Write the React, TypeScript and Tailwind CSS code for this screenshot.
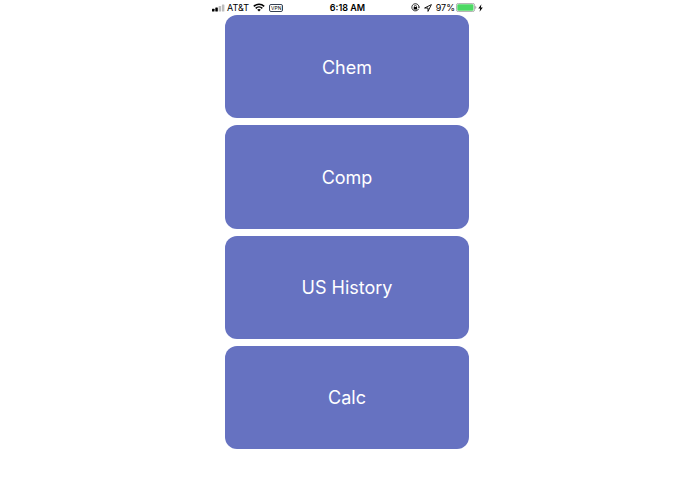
const classes = ['Chem', 'Comp', 'US History', 'Calc'];

function SignalIcon() {
  return (
    <svg width="13" height="8" viewBox="0 0 13 8" aria-hidden="true">
      <rect x="0" y="4.7" width="2.5" height="2.8" rx="0.5" fill="#000" />
      <rect x="3.3" y="3.5" width="2.5" height="4" rx="0.5" fill="#000" />
      <rect x="6.6" y="2" width="2.5" height="5.5" rx="0.5" fill="#bdbdbd" />
      <rect x="9.9" y="0.5" width="2.5" height="7" rx="0.5" fill="#bdbdbd" />
    </svg>
  );
}

function WifiIcon() {
  return (
    <svg width="12" height="9" viewBox="0 0 12 9" fill="none" stroke="#000" strokeWidth="1.5" aria-hidden="true">
      <path d="M0.8 3.4a7.4 7.4 0 0 1 10.4 0" />
      <path d="M2.7 5.4a4.7 4.7 0 0 1 6.6 0" />
      <path d="M6 8.5 4.2 6.8a2.6 2.6 0 0 1 3.6 0Z" fill="#000" stroke="none" />
    </svg>
  );
}

function RotationLockIcon() {
  return (
    <svg width="9" height="9" viewBox="0 0 9 9" fill="none" stroke="#000" aria-hidden="true">
      <path d="M7.7 5.8A3.6 3.6 0 1 1 8 3.8" strokeWidth="0.8" />
      <path d="M6.8 3.7h2.2L8 5.2Z" fill="#000" stroke="none" />
      <rect x="2.7" y="4" width="3.4" height="2.5" rx="0.3" fill="#000" stroke="none" />
      <path d="M3.4 4.2V3.3a1 1 0 0 1 2 0v0.9" strokeWidth="0.7" />
    </svg>
  );
}

function LocationIcon() {
  return (
    <svg width="8" height="8" viewBox="0 0 8 8" fill="none" stroke="#000" strokeWidth="0.9" strokeLinejoin="round" aria-hidden="true">
      <path d="M7.4 0.6 0.6 4H4v3.4Z" />
    </svg>
  );
}

function BatteryIcon() {
  return (
    <svg width="21" height="9" viewBox="0 0 21 9" aria-hidden="true">
      <rect x="0.4" y="0.4" width="18.2" height="8.2" rx="2" fill="#fff" stroke="#8a8a8a" strokeWidth="0.7" />
      <rect x="1.3" y="1.3" width="16.2" height="6.4" rx="1.2" fill="#4cd964" />
      <path d="M19.4 3.1c1.2 0.4 1.2 2.4 0 2.8Z" fill="#8a8a8a" />
    </svg>
  );
}

function BoltIcon() {
  return (
    <svg width="5" height="8" viewBox="0 0 5 8" aria-hidden="true">
      <path d="M3.4 0.3 0.3 4.4H2.2L1.6 7.7 4.8 3.4H2.8Z" fill="#000" />
    </svg>
  );
}

function StatusBar() {
  return (
    <header className="grid grid-cols-[1fr_auto_1fr] items-center h-[15px] px-[3px] text-[9px] leading-none text-black">
      <div className="flex items-center gap-[2px]">
        <SignalIcon />
        <span>AT&amp;T</span>
        <span className="flex items-center gap-1 pl-[2px]">
          <WifiIcon />
          <span className="rounded-xs border border-gray-700 px-px text-[5px] leading-[6px]">VPN</span>
        </span>
      </div>
      <time className="font-semibold">6:18 AM</time>
      <div className="flex items-center justify-end gap-px">
        <span className="flex items-center gap-1 pr-[3px]">
          <RotationLockIcon />
          <LocationIcon />
        </span>
        <span>97%</span>
        <BatteryIcon />
        <BoltIcon />
      </div>
    </header>
  );
}

export default function App() {
  return (
    <div className="min-h-screen bg-white font-['Inter','Liberation_Sans',sans-serif]">
      <div className="mx-auto max-w-[277px]">
        <StatusBar />
        <main className="grid auto-rows-fr gap-[7px] min-h-[434px] pl-4 pr-[17px]">
          {classes.map((name) => (
            <button
              key={name}
              type="button"
              className="rounded-xl bg-[#6672c1] pt-[2px] text-[18px] leading-6 text-white cursor-pointer"
            >
              {name}
            </button>
          ))}
        </main>
      </div>
    </div>
  );
}
